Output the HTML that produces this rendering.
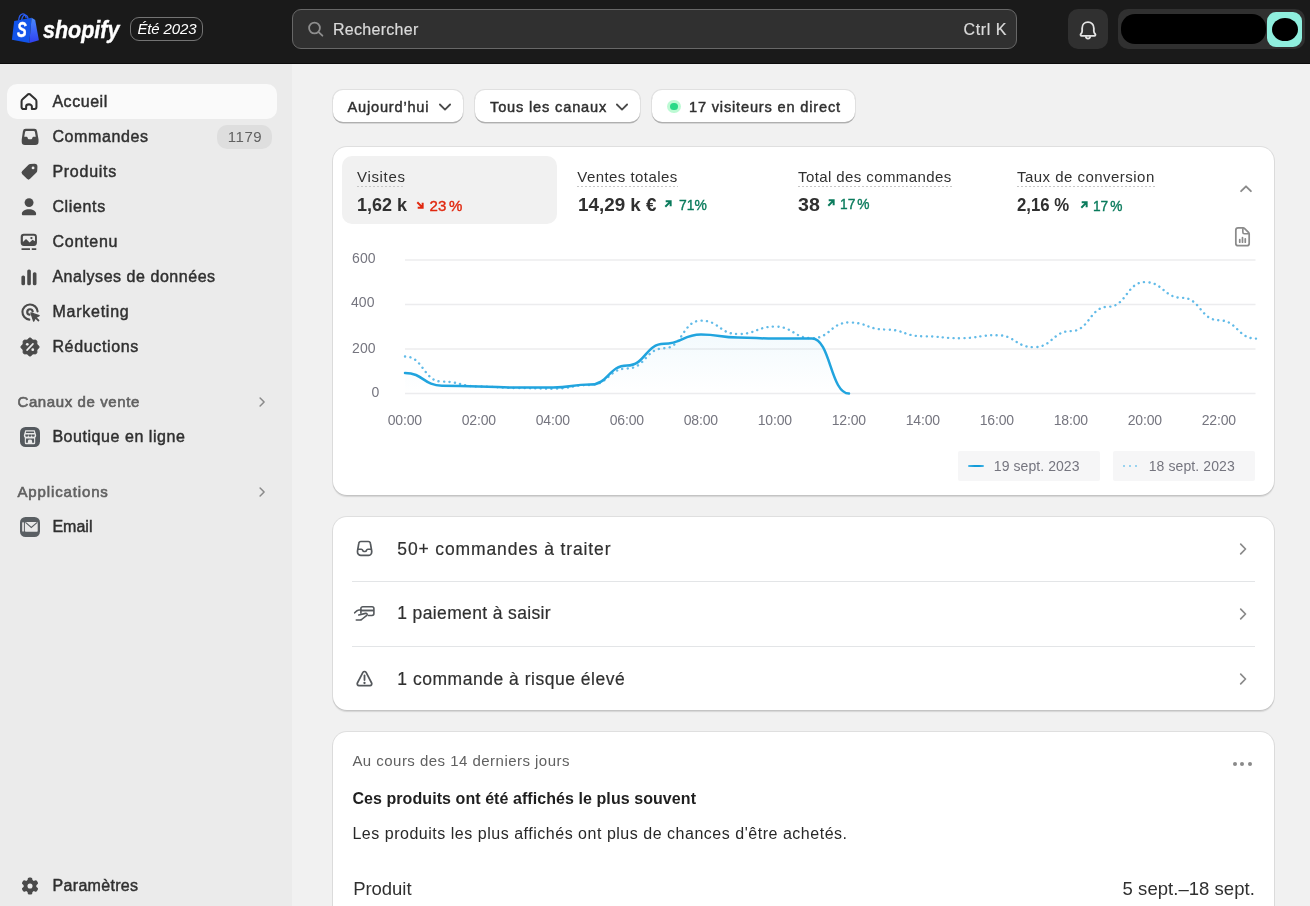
<!DOCTYPE html>
<html lang="fr">
<head>
<meta charset="utf-8">
<title>Shopify · Accueil</title>
<style>
*{box-sizing:border-box;margin:0;padding:0}
html,body{width:1310px;height:906px;overflow:hidden;background:#f1f1f1;font-family:"Liberation Sans",sans-serif;color:#303030}
.b{position:absolute}
.t{position:absolute;white-space:nowrap;line-height:1;font-family:"Liberation Sans",sans-serif}
svg{position:absolute;overflow:visible}
.card{position:absolute;background:#fff;border-radius:14px;box-shadow:0 1.2px 1.2px 0 rgba(0,0,0,.12),0 0 0 1px rgba(0,0,0,.075)}
.btn{position:absolute;background:#fff;border-radius:10px;box-shadow:0 1.5px 0 0 rgba(0,0,0,.22),0 0 0 1px rgba(0,0,0,.07)}
.dot{position:absolute;height:1px;background:repeating-linear-gradient(90deg,#c6c6c6 0 2px,transparent 2px 4px)}
#tx{position:absolute;left:0;top:0;width:1310px;height:906px;will-change:transform}
.hr{position:absolute;height:1px;background:#e3e5e7}
</style>
</head>
<body>
<div class="b" style="left:0;top:0;width:1310px;height:64px;background:#1a1a1a;border-bottom:1.2px solid #0b0b0b"></div>
<div class="b" style="left:0;top:64px;width:292px;height:842px;background:#ebebeb"></div>
<div class="b" style="left:292px;top:64px;width:1018px;height:842px;background:#f1f1f1"></div>
<svg style="left:10px;top:10px" width="32" height="36" viewBox="0 0 32 36">
<path d="M8.6 10.5c.3-3 1.6-6.3 4.2-6.6 1.7-.1 2.9 1.6 3.4 4.3" fill="none" stroke="#2a5df5" stroke-width="1.3"/>
<path d="M11.6 10c.6-2.6 2-5 3.9-4.8 1.5.2 2.3 1.9 2.6 3.7" fill="none" stroke="#2a5df5" stroke-width="1.3"/>
<defs><linearGradient id="bg1" x1="0" y1="0" x2="0" y2="1"><stop offset="0" stop-color="#4a8bff"/><stop offset="1" stop-color="#2f3ff0"/></linearGradient></defs>
<path d="M4.2 11 L21.6 7.8 L19.3 33 L1.9 29.8 Z" fill="#1254ea"/>
<path d="M21.6 7.8 L25.2 10.1 L28.9 30.3 L19.3 33 Z" fill="url(#bg1)"/>
</svg>
<div class="b" style="left:292.3px;top:9.2px;width:724.7px;height:39.4px;background:#303030;border:1px solid #676767;border-radius:9px"></div>
<svg style="left:306px;top:19px" width="20" height="20" viewBox="0 0 20 20"><circle cx="8.5" cy="9" r="5.4" fill="none" stroke="#8e8e8e" stroke-width="1.8"/><path d="M12.6 13.1 L16.4 16.7" stroke="#8e8e8e" stroke-width="1.8" stroke-linecap="round"/></svg>
<div class="b" style="left:130px;top:17px;width:73px;height:24px;border:1px solid #747474;border-radius:9px"></div>
<div class="b" style="left:1068px;top:9px;width:40px;height:40px;background:#303030;border-radius:10px"></div>
<svg style="left:1075.3px;top:18px" width="26" height="26" viewBox="0 0 20 20"><path d="M10 3.2c-2.7 0-4.5 2-4.5 4.6v2.2c0 .9-.4 1.7-1 2.3-.5.5-.2 1.4.6 1.4h9.8c.8 0 1.1-.9.6-1.4-.6-.6-1-1.4-1-2.3v-2.2c0-2.6-1.8-4.6-4.5-4.6z" fill="none" stroke="#e3e3e3" stroke-width="1.4" stroke-linejoin="round"/><path d="M8.3 14.1a1.7 1.7 0 0 0 3.4 0" fill="none" stroke="#e3e3e3" stroke-width="1.4"/></svg>
<div class="b" style="left:1118px;top:9px;width:187px;height:40px;background:#303030;border-radius:10px"></div>
<div class="b" style="left:1121px;top:14px;width:145px;height:30px;background:#000;border-radius:14px"></div>
<div class="b" style="left:1267px;top:12px;width:35px;height:35px;background:#8fefde;border-radius:9px"></div>
<div class="b" style="left:1272px;top:17.5px;width:26px;height:23px;background:#000;border-radius:50%"></div>
<div class="b" style="left:7px;top:84px;width:270px;height:35px;background:#fafafa;border-radius:10px"></div>
<div class="b" style="left:217px;top:124.5px;width:55px;height:24px;background:#dedede;border-radius:10px"></div>
<svg style="left:17.2px;top:88.7px" width="24" height="24" viewBox="0 0 20 20"><path d="M3.8 10.4 c0 -.7 .3 -1.4 .8 -1.8 L8.8 4.7 c.7 -.6 1.7 -.6 2.4 0 L15.4 8.6 c.5 .4 .8 1.1 .8 1.8 V15.1 a1.6 1.6 0 0 1 -1.6 1.6 H12.4 V14.7 a2.4 1.9 0 0 0 -4.8 0 V16.7 H5.4 a1.6 1.6 0 0 1 -1.6 -1.6 Z" fill="none" stroke="#303030" stroke-width="1.7" stroke-linejoin="round"/></svg>
<svg style="left:17.5px;top:124.5px" width="24" height="24" viewBox="0 0 20 20"><path d="M6.4 3.2 H13.6 a2.3 2.3 0 0 1 2.3 2 L17.1 12 V14 a2.7 2.7 0 0 1 -2.7 2.7 H5.8 a2.7 2.7 0 0 1 -2.7 -2.7 V12 L4.1 5.2 a2.3 2.3 0 0 1 2.3 -2 Z" fill="#4a4a4a"/><path d="M6.9 4.9 H13.1 a1 1 0 0 1 1 .9 L14.8 9.8 H12.9 c-.5 0 -.8 .3 -.9 .8 c-.2 .8 -.7 1.3 -1.5 1.3 h-1 c-.8 0 -1.3 -.5 -1.5 -1.3 c-.1 -.5 -.4 -.8 -.9 -.8 H5.2 L5.9 5.8 a1 1 0 0 1 1 -.9 Z" fill="#ebebeb"/></svg>
<svg style="left:18px;top:160px" width="23" height="23" viewBox="0 0 20 20"><path d="M10.6 3.4 L14.2 3.2 a2.6 2.6 0 0 1 2.7 2.7 L16.7 9.4 a2.2 2.2 0 0 1 -.65 1.450 L10.5 16.4 a1.9 1.9 0 0 1 -2.7 0 L3.7 12.3 a1.9 1.9 0 0 1 0 -2.7 L9.150 4.050 a2.2 2.2 0 0 1 1.450 -.65 Z" fill="#4a4a4a"/><circle cx="13.1" cy="6.9" r="1.250" fill="#ebebeb"/></svg>
<svg style="left:18.05px;top:195.5px" width="22" height="22" viewBox="0 0 20 20"><circle cx="10.05" cy="6" r="4.05" fill="#4a4a4a"/><path d="M3.5 16.3 c0 -2.6 2.9 -4.2 6.5 -4.2 s6.5 1.6 6.5 4.2 c0 .7 -.5 1.2 -1.2 1.2 H4.7 c-.7 0 -1.2 -.5 -1.2 -1.2 Z" fill="#4a4a4a"/></svg>
<svg style="left:18.05px;top:230.5px" width="22" height="22" viewBox="0 0 20 20"><rect x="2.45" y="2.55" width="14.75" height="11" rx="2.8" fill="#4a4a4a"/><path d="M4.45 5.5 a1.1 1.1 0 0 1 1.1 -1.1 H14.35 a1.1 1.1 0 0 1 1.1 1.1 V9.4 L13.2 7.9 L10.6 10.4 L7.3 7.2 L4.45 10 Z" fill="#ebebeb"/><circle cx="12.2" cy="6.4" r="1.05" fill="#4a4a4a"/><path d="M3.2 16.4 H10.9 M12.5 16.4 H16.6" stroke="#4a4a4a" stroke-width="1.6"/></svg>
<svg style="left:18.05px;top:265.5px" width="22" height="22" viewBox="0 0 20 20"><rect x="3.1" y="8.6" width="3.3" height="9" rx="1.5" fill="#4a4a4a"/><rect x="8.4" y="3.1" width="3.3" height="14.5" rx="1.5" fill="#4a4a4a"/><rect x="13.5" y="5.6" width="3.3" height="12" rx="1.5" fill="#4a4a4a"/></svg>
<svg style="left:18.8px;top:300.6px" width="22" height="22" viewBox="0 0 20 20"><path d="M16.9 9.4 A6.9 6.9 0 1 0 9.4 16.9" fill="none" stroke="#4a4a4a" stroke-width="1.9" stroke-linecap="round"/><path d="M12.450 9.5 A2.5 2.5 0 1 0 9.5 12.450" fill="none" stroke="#4a4a4a" stroke-width="2" stroke-linecap="round"/><path d="M10.9 10.9 L18.3 13.3 L15.3 14.9 L18 17.6 L17.6 18 L14.9 15.3 L13.3 18.3 Z" fill="#4a4a4a" stroke="#4a4a4a" stroke-width="1.2" stroke-linejoin="round"/></svg>
<svg style="left:18.6px;top:335.5px" width="22" height="22" viewBox="0 0 20 20"><path d="M10.00 1.72 L10.54 1.83 L11.04 2.13 L11.48 2.55 L11.88 2.99 L12.25 3.36 L12.65 3.61 L13.10 3.71 L13.63 3.71 L14.22 3.68 L14.83 3.70 L15.40 3.84 L15.85 4.15 L16.16 4.60 L16.30 5.17 L16.32 5.78 L16.29 6.37 L16.29 6.90 L16.39 7.35 L16.64 7.75 L17.01 8.12 L17.45 8.52 L17.87 8.96 L18.17 9.46 L18.28 10.00 L18.17 10.54 L17.87 11.04 L17.45 11.48 L17.01 11.88 L16.64 12.25 L16.39 12.65 L16.29 13.10 L16.29 13.63 L16.32 14.22 L16.30 14.83 L16.16 15.40 L15.85 15.85 L15.40 16.16 L14.83 16.30 L14.22 16.32 L13.63 16.29 L13.10 16.29 L12.65 16.39 L12.25 16.64 L11.88 17.01 L11.48 17.45 L11.04 17.87 L10.54 18.17 L10.00 18.28 L9.46 18.17 L8.96 17.87 L8.52 17.45 L8.12 17.01 L7.75 16.64 L7.35 16.39 L6.90 16.29 L6.37 16.29 L5.78 16.32 L5.17 16.30 L4.60 16.16 L4.15 15.85 L3.84 15.40 L3.70 14.83 L3.68 14.22 L3.71 13.63 L3.71 13.10 L3.61 12.65 L3.36 12.25 L2.99 11.88 L2.55 11.48 L2.13 11.04 L1.83 10.54 L1.72 10.00 L1.83 9.46 L2.13 8.96 L2.55 8.52 L2.99 8.12 L3.36 7.75 L3.61 7.35 L3.71 6.90 L3.71 6.37 L3.68 5.78 L3.70 5.17 L3.84 4.60 L4.15 4.15 L4.60 3.84 L5.17 3.70 L5.78 3.68 L6.37 3.71 L6.90 3.71 L7.35 3.61 L7.75 3.36 L8.12 2.99 L8.52 2.55 L8.96 2.13 L9.46 1.83 Z" fill="#4a4a4a" stroke="#4a4a4a" stroke-width=".8" stroke-linejoin="round"/><path d="M7.3 12.8 L12.7 7.2" stroke="#ebebeb" stroke-width="1.5" stroke-linecap="round"/><circle cx="7.5" cy="7.6" r="1.250" fill="#ebebeb"/><circle cx="12.5" cy="12.4" r="1.250" fill="#ebebeb"/></svg>
<svg style="left:252px;top:392px" width="20" height="20" viewBox="0 0 20 20"><path d="M8.1 6 L12.1 10 L8.1 14" fill="none" stroke="#8a8a8a" stroke-width="1.5" stroke-linecap="round" stroke-linejoin="round"/></svg>
<svg style="left:252px;top:482px" width="20" height="20" viewBox="0 0 20 20"><path d="M8.1 6 L12.1 10 L8.1 14" fill="none" stroke="#8a8a8a" stroke-width="1.5" stroke-linecap="round" stroke-linejoin="round"/></svg>
<div class="b" style="left:20px;top:427px;width:20px;height:20px;background:#54595e;border-radius:5.5px"></div>
<svg style="left:20px;top:427px" width="20" height="20" viewBox="0 0 20 20"><path d="M5.3 3.2 H14.7 L16.2 8.3 c0 1.1 -.4 1.9 -1 2.4 V16 a1.2 1.2 0 0 1 -1.2 1.2 H6 a1.2 1.2 0 0 1 -1.2 -1.2 V10.7 c-.6 -.5 -1 -1.3 -1 -2.4 Z" fill="#e9e9e9"/><rect x="5.9" y="4.4" width="8.2" height="1.7" rx=".4" fill="#54595e"/><path d="M5.3 7.6 h2.9 v.8 a1.450 1.450 0 0 1 -2.9 0 Z M8.550 7.6 h2.9 v.8 a1.450 1.450 0 0 1 -2.9 0 Z M11.8 7.6 h2.9 v.8 a1.450 1.450 0 0 1 -2.9 0 Z" fill="#54595e"/><path d="M5.9 11.4 H14.1 V15.8 H12.1 V14 a2.1 1.4 0 0 0 -4.2 0 V15.8 H5.9 Z" fill="#54595e"/></svg>
<div class="b" style="left:20px;top:517px;width:20px;height:20px;background:#5a5f63;border-radius:5.5px"></div>
<svg style="left:20px;top:517px" width="20" height="20" viewBox="0 0 20 20"><rect x="2.1" y="5.3" width="2" height="9.2" rx=".6" fill="#d9d9d9"/><rect x="5" y="5" width="12.7" height="9.7" rx=".7" fill="#e9e9e9"/><path d="M5.5 5.3 L11.3 10.5 L17.2 5.3" fill="none" stroke="#5a5f63" stroke-width="1.1"/></svg>
<svg style="left:18.9px;top:874.85px" width="22" height="22" viewBox="-11 -11 22 22"><g fill="#4a4a4a"><circle r="6.4"/><rect x="-2.35" y="-8.6" width="4.7" height="6" rx="1.7" transform="rotate(0)"/><rect x="-2.35" y="-8.6" width="4.7" height="6" rx="1.7" transform="rotate(60)"/><rect x="-2.35" y="-8.6" width="4.7" height="6" rx="1.7" transform="rotate(120)"/><rect x="-2.35" y="-8.6" width="4.7" height="6" rx="1.7" transform="rotate(180)"/><rect x="-2.35" y="-8.6" width="4.7" height="6" rx="1.7" transform="rotate(240)"/><rect x="-2.35" y="-8.6" width="4.7" height="6" rx="1.7" transform="rotate(300)"/></g><circle r="2.55" fill="#ebebeb"/></svg>
<div class="btn" style="left:333px;top:90.3px;width:130px;height:31.7px"></div>
<div class="btn" style="left:475px;top:90.3px;width:165px;height:31.7px"></div>
<div class="btn" style="left:652px;top:90.3px;width:203px;height:31.7px"></div>
<svg style="left:435px;top:97.2px" width="20" height="20" viewBox="0 0 20 20"><path d="M4.9 7.5 L10 12.6 L15.1 7.5" fill="none" stroke="#4a4a4a" stroke-width="1.8" stroke-linecap="round" stroke-linejoin="round"/></svg>
<svg style="left:612.2px;top:97.2px" width="20" height="20" viewBox="0 0 20 20"><path d="M4.9 7.5 L10 12.6 L15.1 7.5" fill="none" stroke="#4a4a4a" stroke-width="1.8" stroke-linecap="round" stroke-linejoin="round"/></svg>
<div class="b" style="left:667.2px;top:99.5px;width:13.6px;height:13.6px;border-radius:50%;background:#bdfad4"></div>
<div class="b" style="left:670.4px;top:102.7px;width:7.2px;height:7.2px;border-radius:50%;background:#29d987"></div>
<div class="card" style="left:333px;top:147px;width:941px;height:347.5px"></div>
<div class="b" style="left:342px;top:156px;width:215px;height:68px;background:#f1f1f1;border-radius:10px"></div>
<div class="dot" style="left:357px;top:186px;width:48px"></div>
<div class="dot" style="left:577px;top:186px;width:100.5px"></div>
<div class="dot" style="left:797.5px;top:186px;width:154.0px"></div>
<div class="dot" style="left:1016.5px;top:186px;width:138.0px"></div>
<svg style="left:416px;top:201.2px" width="8" height="8" viewBox="0 0 8 8"><path d="M1.3 1.3 L6.4 6.4 M1.7 6.65 H6.65 V1.7" fill="none" stroke="#e0280f" stroke-width="2"/></svg>
<svg style="left:663.5px;top:200.3px" width="8" height="8" viewBox="0 0 8 8"><path d="M1.3 6.7 L6.4 1.6 M1.7 1.35 H6.65 V6.3" fill="none" stroke="#0a7b5c" stroke-width="2"/></svg>
<svg style="left:826.5px;top:199.2px" width="8" height="8" viewBox="0 0 8 8"><path d="M1.3 6.7 L6.4 1.6 M1.7 1.35 H6.65 V6.3" fill="none" stroke="#0a7b5c" stroke-width="2"/></svg>
<svg style="left:1079.7px;top:201px" width="8" height="8" viewBox="0 0 8 8"><path d="M1.3 6.7 L6.4 1.6 M1.7 1.35 H6.65 V6.3" fill="none" stroke="#0a7b5c" stroke-width="2"/></svg>
<svg style="left:1236.4px;top:178.8px" width="20" height="20" viewBox="0 0 20 20"><path d="M5.1 12.2 L10 7.3 L14.9 12.2" fill="none" stroke="#8a8a8a" stroke-width="1.9" stroke-linecap="round" stroke-linejoin="round"/></svg>
<svg style="left:1231px;top:225px" width="23" height="23" viewBox="0 0 20 20"><path d="M4.2 4.5 a2 2 0 0 1 2 -2 h4.3 c.5 0 1 .2 1.4 .6 l3.3 3.3 c.4 .4 .6 .9 .6 1.4 v8.2 a2 2 0 0 1 -2 2 H6.2 a2 2 0 0 1 -2 -2 Z" fill="none" stroke="#8a8a8a" stroke-width="1.5"/><path d="M10.3 2.8 V6.3 a1.3 1.3 0 0 0 1.3 1.3 h3.9" fill="none" stroke="#8a8a8a" stroke-width="1.4"/><path d="M7.6 15 v-2.4 M10 15 v-4 M12.4 15 v-3" stroke="#8a8a8a" stroke-width="1.5" stroke-linecap="round"/></svg>
<svg style="left:0;top:0" width="1310" height="906" viewBox="0 0 1310 906">
<defs><linearGradient id="ag" x1="0" y1="334" x2="0" y2="393" gradientUnits="userSpaceOnUse"><stop offset="0" stop-color="#1ea3dd" stop-opacity=".055"/><stop offset="1" stop-color="#1ea3dd" stop-opacity="0"/></linearGradient></defs>
<path d="M405 260 H1255.5" stroke="#ececee" stroke-width="1.3"/><path d="M405 304.5 H1255.5" stroke="#ececee" stroke-width="1.3"/><path d="M405 349 H1255.5" stroke="#ececee" stroke-width="1.3"/><path d="M405 393.5 H1255.5" stroke="#ececee" stroke-width="1.3"/>
<path d="M405.0 373.0 C423.5 373.0 423.5 385.7 442.0 385.7 C460.5 385.7 460.5 386.5 479.0 386.5 C497.5 386.5 497.5 387.6 516.0 387.6 C534.5 387.6 534.5 387.6 553.0 387.6 C571.5 387.6 571.5 384.6 590.0 384.6 C608.5 384.6 608.5 365.5 627.0 365.5 C645.5 365.5 645.5 343.8 664.0 343.8 C682.5 343.8 682.5 334.5 701.0 334.5 C719.5 334.5 719.5 337.5 738.0 337.5 C756.5 337.5 756.5 338.6 775.0 338.6 C793.5 338.6 793.5 338.6 812.0 338.6 C830.5 338.6 830.5 393.6 849.0 393.6 L849.0 393.5 L405.0 393.5 Z" fill="url(#ag)"/>
<path d="M405.0 356.5 C423.5 356.5 423.5 381.6 442.0 381.6 C460.5 381.6 460.5 386.5 479.0 386.5 C497.5 386.5 497.5 388.0 516.0 388.0 C534.5 388.0 534.5 388.7 553.0 388.7 C571.5 388.7 571.5 385.0 590.0 385.0 C608.5 385.0 608.5 368.5 627.0 368.5 C645.5 368.5 645.5 348.3 664.0 348.3 C682.5 348.3 682.5 320.6 701.0 320.6 C719.5 320.6 719.5 334.1 738.0 334.1 C756.5 334.1 756.5 326.6 775.0 326.6 C793.5 326.6 793.5 338.2 812.0 338.2 C830.5 338.2 830.5 322.5 849.0 322.5 C867.5 322.5 867.5 329.6 886.0 329.6 C904.5 329.6 904.5 336.3 923.0 336.3 C941.5 336.3 941.5 338.2 960.0 338.2 C978.5 338.2 978.5 335.2 997.0 335.2 C1015.5 335.2 1015.5 347.2 1034.0 347.2 C1052.5 347.2 1052.5 331.1 1071.0 331.1 C1089.5 331.1 1089.5 306.8 1108.0 306.8 C1126.5 306.8 1126.5 282.1 1145.0 282.1 C1163.5 282.1 1163.5 297.8 1182.0 297.8 C1200.5 297.8 1200.5 320.3 1219.0 320.3 C1237.5 320.3 1237.5 338.6 1256.0 338.6" fill="none" stroke="#62bbe8" stroke-width="2.4" stroke-linecap="round" stroke-dasharray="0.1 5.3"/>
<path d="M405.0 373.0 C423.5 373.0 423.5 385.7 442.0 385.7 C460.5 385.7 460.5 386.5 479.0 386.5 C497.5 386.5 497.5 387.6 516.0 387.6 C534.5 387.6 534.5 387.6 553.0 387.6 C571.5 387.6 571.5 384.6 590.0 384.6 C608.5 384.6 608.5 365.5 627.0 365.5 C645.5 365.5 645.5 343.8 664.0 343.8 C682.5 343.8 682.5 334.5 701.0 334.5 C719.5 334.5 719.5 337.5 738.0 337.5 C756.5 337.5 756.5 338.6 775.0 338.6 C793.5 338.6 793.5 338.6 812.0 338.6 C830.5 338.6 830.5 393.6 849.0 393.6" fill="none" stroke="#21a4de" stroke-width="2.5" stroke-linecap="round" stroke-linejoin="round"/>
</svg>
<div class="b" style="left:958px;top:451px;width:142px;height:30px;background:#f6f6f7;border-radius:2px"></div>
<div class="b" style="left:1113px;top:451px;width:142px;height:30px;background:#f6f6f7;border-radius:2px"></div>
<div class="b" style="left:967.5px;top:465.2px;width:16.5px;height:2px;background:linear-gradient(90deg,#4db8e8,#139bd8 40%,#139bd8 70%,#4db8e8);border-radius:1px"></div>
<div class="b" style="left:1122.8px;top:465.2px;width:2.2px;height:2.2px;background:#7cc8ee;border-radius:50%"></div>
<div class="b" style="left:1129.0px;top:465.2px;width:2.2px;height:2.2px;background:#7cc8ee;border-radius:50%"></div>
<div class="b" style="left:1135.2px;top:465.2px;width:2.2px;height:2.2px;background:#7cc8ee;border-radius:50%"></div>
<div class="card" style="left:333px;top:517px;width:941px;height:193px"></div>
<div class="hr" style="left:352px;top:580.5px;width:903px"></div>
<div class="hr" style="left:352px;top:645.8px;width:903px"></div>
<svg style="left:1232.5px;top:538.5px" width="20" height="20" viewBox="0 0 20 20"><path d="M7.7 5.2 L12.5 10 L7.7 14.8" fill="none" stroke="#8a8a8a" stroke-width="1.7" stroke-linecap="round" stroke-linejoin="round"/></svg>
<svg style="left:1232.5px;top:603.5px" width="20" height="20" viewBox="0 0 20 20"><path d="M7.7 5.2 L12.5 10 L7.7 14.8" fill="none" stroke="#8a8a8a" stroke-width="1.7" stroke-linecap="round" stroke-linejoin="round"/></svg>
<svg style="left:1232.5px;top:668.5px" width="20" height="20" viewBox="0 0 20 20"><path d="M7.7 5.2 L12.5 10 L7.7 14.8" fill="none" stroke="#8a8a8a" stroke-width="1.7" stroke-linecap="round" stroke-linejoin="round"/></svg>
<svg style="left:344px;top:531px" width="50" height="35" viewBox="0 0 50 35"><path d="M17 10.5 H24.2 a2.2 2.2 0 0 1 2.2 1.9 L27.7 20 V21 a3.4 3.4 0 0 1 -3.4 3.4 H16.9 a3.4 3.4 0 0 1 -3.4 -3.4 V20 L14.8 12.4 a2.2 2.2 0 0 1 2.2 -1.9 Z" fill="none" stroke="#54585c" stroke-width="1.7"/><path d="M13.7 18.2 H17.3 c.8 0 1.2 .4 1.4 1 c.2 .8 .7 1.3 1.5 1.3 h.8 c.8 0 1.3 -.5 1.5 -1.3 c.2 -.6 .6 -1 1.4 -1 H27.5" fill="none" stroke="#54585c" stroke-width="1.6"/></svg>
<svg style="left:344px;top:595px" width="50" height="35" viewBox="0 0 50 35"><path d="M16.9 18.8 V13.6 a1.9 1.9 0 0 1 1.9 -1.9 H28 a1.9 1.9 0 0 1 1.9 1.9 V18.6 a1.9 1.9 0 0 1 -1.9 1.9 H23.8" fill="none" stroke="#54585c" stroke-width="1.6"/><path d="M16.9 15.5 H29.9" stroke="#54585c" stroke-width="1.9"/><path d="M10.7 17.8 C12 16.3 13.2 15 14.8 15 H16.5" fill="none" stroke="#54585c" stroke-width="1.6" stroke-linecap="round"/><path d="M14.8 20 L21.5 18.4 c1.4 -.3 2.2 1.1 1.3 1.9 L17.6 24.5 c-.4 .3 -.9 .5 -1.4 .5 H12.3" fill="none" stroke="#54585c" stroke-width="1.6" stroke-linecap="round" stroke-linejoin="round"/></svg>
<svg style="left:344px;top:661px" width="50" height="35" viewBox="0 0 50 35"><path d="M18.9 11.4 a1.850 1.850 0 0 1 3.2 0 L27.6 22 a1.850 1.850 0 0 1 -1.6 2.7 H15 a1.850 1.850 0 0 1 -1.6 -2.7 Z" fill="none" stroke="#54585c" stroke-width="1.7" stroke-linejoin="round"/><path d="M20.5 14.4 V19" stroke="#54585c" stroke-width="1.8" stroke-linecap="round"/><circle cx="20.5" cy="22" r="1.150" fill="#54585c"/></svg>
<div class="card" style="left:333px;top:732.2px;width:941px;height:200px"></div>
<div class="b" style="left:1233.3px;top:761.6px;width:4px;height:4px;background:#8a8a8a;border-radius:50%"></div>
<div class="b" style="left:1240.4px;top:761.6px;width:4px;height:4px;background:#8a8a8a;border-radius:50%"></div>
<div class="b" style="left:1247.5px;top:761.6px;width:4px;height:4px;background:#8a8a8a;border-radius:50%"></div>
<div id="tx">
<div class="t" style="left:16.7px;top:19.4px;font-size:22px;color:#ffffff;font-weight:700;font-style:italic;-webkit-text-stroke:0.5px #ffffff;transform:scaleX(0.660);transform-origin:0 0;">S</div>
<div class="t" style="left:43.0px;top:18.1px;font-size:24px;color:#ffffff;font-weight:700;font-style:italic;-webkit-text-stroke:0.4px #ffffff;transform:scaleX(0.896);transform-origin:0 0;">shopify</div>
<div class="t" style="left:137.5px;top:21.3px;font-size:15px;color:#ffffff;font-style:italic;letter-spacing:-0.15px;">Été 2023</div>
<div class="t" style="left:333.0px;top:21.7px;font-size:16px;color:#dadada;letter-spacing:0.28px;-webkit-text-stroke:0.2px #dadada;">Rechercher</div>
<div class="t" style="left:963.5px;top:21.7px;font-size:16px;color:#dadada;letter-spacing:0.60px;-webkit-text-stroke:0.2px #dadada;">Ctrl K</div>
<div class="t" style="left:52.4px;top:93.5px;font-size:16px;color:#303030;letter-spacing:0.55px;-webkit-text-stroke:0.45px #303030;">Accueil</div>
<div class="t" style="left:52.4px;top:128.5px;font-size:16px;color:#303030;letter-spacing:0.62px;-webkit-text-stroke:0.45px #303030;">Commandes</div>
<div class="t" style="left:52.4px;top:163.5px;font-size:16px;color:#303030;letter-spacing:0.74px;-webkit-text-stroke:0.45px #303030;">Produits</div>
<div class="t" style="left:52.4px;top:198.5px;font-size:16px;color:#303030;letter-spacing:0.65px;-webkit-text-stroke:0.45px #303030;">Clients</div>
<div class="t" style="left:52.4px;top:233.5px;font-size:16px;color:#303030;letter-spacing:0.77px;-webkit-text-stroke:0.45px #303030;">Contenu</div>
<div class="t" style="left:52.4px;top:268.5px;font-size:16px;color:#303030;letter-spacing:0.54px;-webkit-text-stroke:0.45px #303030;">Analyses de données</div>
<div class="t" style="left:52.4px;top:303.5px;font-size:16px;color:#303030;letter-spacing:0.76px;-webkit-text-stroke:0.45px #303030;">Marketing</div>
<div class="t" style="left:52.4px;top:338.5px;font-size:16px;color:#303030;letter-spacing:0.65px;-webkit-text-stroke:0.45px #303030;">Réductions</div>
<div class="t" style="left:227.8px;top:129.1px;font-size:15px;color:#616161;letter-spacing:0.51px;">1179</div>
<div class="t" style="left:17.5px;top:394.0px;font-size:15px;color:#616161;letter-spacing:0.60px;-webkit-text-stroke:0.6px #616161;">Canaux de vente</div>
<div class="t" style="left:52.4px;top:428.5px;font-size:16px;color:#303030;letter-spacing:0.55px;-webkit-text-stroke:0.45px #303030;">Boutique en ligne</div>
<div class="t" style="left:17.5px;top:484.3px;font-size:15px;color:#616161;letter-spacing:0.86px;-webkit-text-stroke:0.6px #616161;">Applications</div>
<div class="t" style="left:52.4px;top:518.5px;font-size:16px;color:#303030;letter-spacing:0.02px;-webkit-text-stroke:0.45px #303030;">Email</div>
<div class="t" style="left:52.6px;top:877.5px;font-size:16px;color:#303030;letter-spacing:0.30px;-webkit-text-stroke:0.45px #303030;">Paramètres</div>
<div class="t" style="left:347.5px;top:99.6px;font-size:14.6px;color:#303030;letter-spacing:0.80px;-webkit-text-stroke:0.45px #303030;">Aujourd’hui</div>
<div class="t" style="left:490.0px;top:99.6px;font-size:14.6px;color:#303030;letter-spacing:0.83px;-webkit-text-stroke:0.45px #303030;">Tous les canaux</div>
<div class="t" style="left:689.0px;top:99.6px;font-size:14.6px;color:#303030;letter-spacing:0.82px;-webkit-text-stroke:0.45px #303030;">17 visiteurs en direct</div>
<div class="t" style="left:357.0px;top:168.7px;font-size:15px;color:#303030;letter-spacing:0.68px;">Visites</div>
<div class="t" style="left:357.0px;top:196.8px;font-size:17.5px;color:#303030;font-weight:700;transform:scaleX(1.028);transform-origin:0 0;">1,62 k</div>
<div class="t" style="left:429.6px;top:198.1px;font-size:15px;color:#e0280f;-webkit-text-stroke:0.4px #e0280f;word-spacing:-1.5px;">23 %</div>
<div class="t" style="left:577.3px;top:168.7px;font-size:15px;color:#303030;letter-spacing:0.44px;">Ventes totales</div>
<div class="t" style="left:577.5px;top:196.8px;font-size:17.5px;color:#303030;font-weight:700;transform:scaleX(1.076);transform-origin:0 0;">14,29 k €</div>
<div class="t" style="left:678.5px;top:197.1px;font-size:15px;color:#0a7b5c;-webkit-text-stroke:0.4px #0a7b5c;transform:scaleX(0.926);transform-origin:0 0;">71%</div>
<div class="t" style="left:798.0px;top:168.7px;font-size:15px;color:#303030;letter-spacing:0.41px;">Total des commandes</div>
<div class="t" style="left:797.9px;top:196.8px;font-size:17.5px;color:#303030;font-weight:700;transform:scaleX(1.120);transform-origin:0 0;">38</div>
<div class="t" style="left:839.5px;top:195.7px;font-size:15px;color:#0a7b5c;-webkit-text-stroke:0.4px #0a7b5c;word-spacing:-2px;transform:scaleX(0.916);transform-origin:0 0;">17 %</div>
<div class="t" style="left:1017.0px;top:168.7px;font-size:15px;color:#303030;letter-spacing:0.47px;">Taux de conversion</div>
<div class="t" style="left:1016.9px;top:196.8px;font-size:17.5px;color:#303030;font-weight:700;transform:scaleX(0.958);transform-origin:0 0;">2,16 %</div>
<div class="t" style="left:1092.7px;top:198.1px;font-size:15px;color:#0a7b5c;-webkit-text-stroke:0.4px #0a7b5c;word-spacing:-2px;transform:scaleX(0.913);transform-origin:0 0;">17 %</div>
<div class="t" style="left:352.1px;top:251.4px;font-size:14px;color:#75757f;letter-spacing:0.02px;">600</div>
<div class="t" style="left:351.0px;top:295.1px;font-size:14px;color:#75757f;letter-spacing:0.07px;">400</div>
<div class="t" style="left:352.1px;top:340.6px;font-size:14px;color:#75757f;letter-spacing:0.02px;">200</div>
<div class="t" style="left:371.5px;top:384.6px;font-size:14px;color:#75757f;">0</div>
<div class="t" style="left:387.8px;top:412.9px;font-size:14px;color:#75757f;letter-spacing:-0.21px;">00:00</div>
<div class="t" style="left:461.8px;top:412.9px;font-size:14px;color:#75757f;letter-spacing:-0.21px;">02:00</div>
<div class="t" style="left:535.8px;top:412.9px;font-size:14px;color:#75757f;letter-spacing:-0.21px;">04:00</div>
<div class="t" style="left:609.8px;top:412.9px;font-size:14px;color:#75757f;letter-spacing:-0.21px;">06:00</div>
<div class="t" style="left:683.8px;top:412.9px;font-size:14px;color:#75757f;letter-spacing:-0.21px;">08:00</div>
<div class="t" style="left:757.8px;top:412.9px;font-size:14px;color:#75757f;letter-spacing:-0.21px;">10:00</div>
<div class="t" style="left:831.8px;top:412.9px;font-size:14px;color:#75757f;letter-spacing:-0.21px;">12:00</div>
<div class="t" style="left:905.8px;top:412.9px;font-size:14px;color:#75757f;letter-spacing:-0.21px;">14:00</div>
<div class="t" style="left:979.8px;top:412.9px;font-size:14px;color:#75757f;letter-spacing:-0.21px;">16:00</div>
<div class="t" style="left:1053.8px;top:412.9px;font-size:14px;color:#75757f;letter-spacing:-0.21px;">18:00</div>
<div class="t" style="left:1127.8px;top:412.9px;font-size:14px;color:#75757f;letter-spacing:-0.21px;">20:00</div>
<div class="t" style="left:1201.8px;top:412.9px;font-size:14px;color:#75757f;letter-spacing:-0.21px;">22:00</div>
<div class="t" style="left:993.8px;top:458.9px;font-size:14px;color:#75757f;letter-spacing:0.07px;">19 sept. 2023</div>
<div class="t" style="left:1148.7px;top:458.9px;font-size:14px;color:#75757f;letter-spacing:0.10px;">18 sept. 2023</div>
<div class="t" style="left:397.3px;top:540.7px;font-size:17.5px;color:#303030;letter-spacing:0.87px;-webkit-text-stroke:0.2px #303030;">50+ commandes à traiter</div>
<div class="t" style="left:397.3px;top:605.4px;font-size:17.5px;color:#303030;letter-spacing:0.36px;-webkit-text-stroke:0.2px #303030;">1 paiement à saisir</div>
<div class="t" style="left:397.3px;top:670.7px;font-size:17.5px;color:#303030;letter-spacing:0.52px;-webkit-text-stroke:0.2px #303030;">1 commande à risque élevé</div>
<div class="t" style="left:352.4px;top:753.0px;font-size:15px;color:#616161;letter-spacing:0.47px;">Au cours des 14 derniers jours</div>
<div class="t" style="left:352.4px;top:790.5px;font-size:16px;color:#1f1f1f;font-weight:700;letter-spacing:0.07px;">Ces produits ont été affichés le plus souvent</div>
<div class="t" style="left:352.4px;top:826.2px;font-size:16px;color:#282828;letter-spacing:0.52px;">Les produits les plus affichés ont plus de chances d&#x27;être achetés.</div>
<div class="t" style="left:353.2px;top:880.0px;font-size:18.5px;color:#303030;letter-spacing:-0.04px;">Produit</div>
<div class="t" style="left:1122.6px;top:879.6px;font-size:18.5px;color:#303030;letter-spacing:0.04px;">5 sept.–18 sept.</div>
</div>
</body>
</html>
